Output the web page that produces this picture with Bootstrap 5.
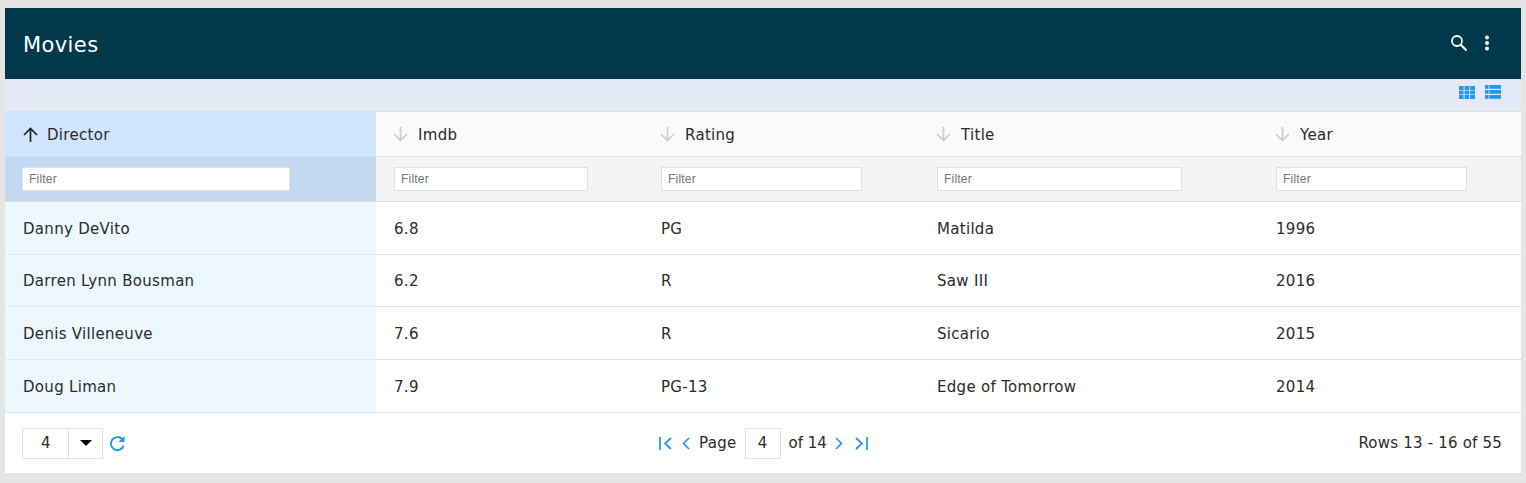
<!DOCTYPE html>
<html lang="en"><head><meta charset="utf-8"><title>Movies</title>
<link href="https://cdn.jsdelivr.net/npm/bootstrap@5.3.0/dist/css/bootstrap.min.css" rel="stylesheet">
<style>
html,body{height:100%}
body{background:#e5e5e5;font-family:"DejaVu Sans",Verdana,sans-serif;font-size:15px;letter-spacing:.3px;color:#2b2b2b;padding:8px 5px 10px;overflow:hidden}
.panel-box{background:#fff;width:1516px;height:465px}
.head-bar{height:71px;background:#00394c;color:#fff;padding:0 31px 1px 18px}
.head-title{font-size:21px;line-height:1;padding-top:5px;letter-spacing:.4px}
.tool-bar{height:33px;background:#e3eaf5;border-bottom:1px solid #dcdfe4;padding:0 20px 6px 0}
.list-ico{margin-left:2px}
.grid-table{width:1516px;table-layout:fixed;border-collapse:separate;border-spacing:0;margin:0}
.c1{width:371px}.c2{width:267px}.c3{width:276px}.c4{width:339px}.c5{width:263px}
.grid-table th,.grid-table td{padding:0 0 0 18px;font-weight:400;vertical-align:middle;border-bottom:1px solid #e0e0e0}
.title-row th{height:45px;background:#fafafa;padding-top:3px}
.title-row th.on{background:#cfe5fd;border-bottom-color:#d5dde6}
.filter-row th{height:45px;background:#f4f4f4}
.filter-row th.on{background:#c3d9f2;padding-left:17px}
.data-row td{height:53px;padding-top:2px}
.data-row.shorter td{height:52px}
.data-row td.on{background:#ecf7fe;border-bottom-color:#dcebf5}
.sort-ico{margin:0 8px 0 -1px;vertical-align:-2px}
.sort-ico.off{margin:0 9px 0 -2px}
.filter-input{display:block;height:24px;border:1px solid #e0e0e0;background:#fff;font:12px "Liberation Sans",Arial,sans-serif;letter-spacing:.2px;padding:0 6px;color:#333;outline:0}
.filter-input::placeholder{color:#757575;opacity:1}
.f1{width:268px}.f2{width:194px}.f3{width:201px}.f4{width:245px}.f5{width:191px}
.foot-bar{height:60px;padding:0 19px 0 17px}
.foot-side{flex:1 1 0}
.size-pick{width:81px;height:31px;border:1px solid #e0e0e0;margin-right:6px}
.size-val{width:46px;border-right:1px solid #e0e0e0;text-align:center;line-height:29px;padding-left:1px}
.size-arrow{flex:1}
.caret-shape{width:0;height:0;border:6px solid transparent;border-top:6px solid #000;border-bottom:0}
.page-box{width:36px;height:31px;border:1px solid #e0e0e0;text-align:center;line-height:29px;margin:0 8px}
.pg-btn{margin:0 6px}
.pg-first{margin:0 4px 0 11px}
.pg-last{margin:0 8px 0 6px}
.pg-label{margin-left:3px}
.pg-of{margin-right:2px;letter-spacing:0}
.rows-txt{letter-spacing:.2px}
</style></head><body>
<div class="panel-box d-flex flex-column">
 <div class="head-bar d-flex align-items-center justify-content-between">
  <div class="head-title">Movies</div>
  <div class="d-flex align-items-center gap-3">
   <svg width="18" height="18" viewBox="0 0 18 18" fill="none" stroke="#fff" stroke-width="1.8"><circle cx="7" cy="7" r="5"/><path d="M10.8 10.8 16.5 16.5" stroke-width="2"/></svg>
   <svg width="6" height="16" viewBox="0 0 6 16" fill="#fff"><circle cx="3" cy="2.5" r="2"/><circle cx="3" cy="8" r="2"/><circle cx="3" cy="13.5" r="2"/></svg>
  </div>
 </div>
 <div class="tool-bar d-flex align-items-center justify-content-end gap-2">
  <svg width="16" height="13" viewBox="0 0 16 13" fill="#2196f3"><rect width="4.6" height="4" y="0"/><rect x="5.6" width="4.6" height="4"/><rect x="11.2" width="4.8" height="4"/><rect y="4.6" width="4.6" height="3.8"/><rect x="5.6" y="4.6" width="4.6" height="3.8"/><rect x="11.2" y="4.6" width="4.8" height="3.8"/><rect y="9" width="4.6" height="4"/><rect x="5.6" y="9" width="4.6" height="4"/><rect x="11.2" y="9" width="4.8" height="4"/></svg>
  <svg class="list-ico" width="16" height="14" viewBox="0 0 16 14" fill="#2196f3"><rect width="3.6" height="3.8"/><rect x="4.4" width="11.6" height="3.8"/><rect y="5" width="3.6" height="3.8"/><rect x="4.4" y="5" width="11.6" height="3.8"/><rect y="10" width="3.6" height="3.8"/><rect x="4.4" y="10" width="11.6" height="3.8"/></svg>
 </div>
 <table class="grid-table">
  <colgroup><col class="c1"><col class="c2"><col class="c3"><col class="c4"><col class="c5"></colgroup>
  <thead>
   <tr class="title-row">
    <th class="on"><svg class="sort-ico" width="17" height="15" viewBox="0 0 17 15" fill="none" stroke="#222" stroke-width="1.7"><path d="M8.5 15V1.5M2 8l6.5-6.5L15 8"/></svg>Director</th>
    <th><svg class="sort-ico off" width="17" height="15" viewBox="0 0 17 15" fill="none" stroke="#ccc" stroke-width="1.7"><path d="M8.5 0v13.5M2 7l6.5 6.5L15 7"/></svg>Imdb</th>
    <th><svg class="sort-ico off" width="17" height="15" viewBox="0 0 17 15" fill="none" stroke="#ccc" stroke-width="1.7"><path d="M8.5 0v13.5M2 7l6.5 6.5L15 7"/></svg>Rating</th>
    <th><svg class="sort-ico off" width="17" height="15" viewBox="0 0 17 15" fill="none" stroke="#ccc" stroke-width="1.7"><path d="M8.5 0v13.5M2 7l6.5 6.5L15 7"/></svg>Title</th>
    <th><svg class="sort-ico off" width="17" height="15" viewBox="0 0 17 15" fill="none" stroke="#ccc" stroke-width="1.7"><path d="M8.5 0v13.5M2 7l6.5 6.5L15 7"/></svg>Year</th>
   </tr>
   <tr class="filter-row">
    <th class="on"><input class="filter-input f1" placeholder="Filter"></th>
    <th><input class="filter-input f2" placeholder="Filter"></th>
    <th><input class="filter-input f3" placeholder="Filter"></th>
    <th><input class="filter-input f4" placeholder="Filter"></th>
    <th><input class="filter-input f5" placeholder="Filter"></th>
   </tr>
  </thead>
  <tbody>
   <tr class="data-row"><td class="on">Danny DeVito</td><td>6.8</td><td>PG</td><td>Matilda</td><td>1996</td></tr>
   <tr class="data-row shorter"><td class="on">Darren Lynn Bousman</td><td>6.2</td><td>R</td><td>Saw III</td><td>2016</td></tr>
   <tr class="data-row"><td class="on">Denis Villeneuve</td><td>7.6</td><td>R</td><td>Sicario</td><td>2015</td></tr>
   <tr class="data-row"><td class="on">Doug Liman</td><td>7.9</td><td>PG-13</td><td>Edge of Tomorrow</td><td>2014</td></tr>
  </tbody>
 </table>
 <div class="foot-bar d-flex align-items-center">
  <div class="foot-side d-flex align-items-center">
   <div class="size-pick d-flex align-items-stretch flex-shrink-0">
    <div class="size-val">4</div>
    <div class="size-arrow d-flex align-items-center justify-content-center"><span class="caret-shape"></span></div>
   </div>
   <svg width="17" height="17" viewBox="0 0 17 17" fill="none" stroke="#2196f3" stroke-width="2"><path d="M14.6 10.6A6.5 6.5 0 1 1 13 4"/><path d="M15.5 1v6h-6" fill="#2196f3" stroke="none"/></svg>
  </div>
  <div class="d-flex align-items-center flex-shrink-0">
   <svg class="pg-first" width="13" height="13" viewBox="0 0 13 13" fill="none" stroke="#2196f3" stroke-width="1.7"><path d="M1 0v13M12 1 6 6.5l6 5.5"/></svg>
   <svg class="pg-btn" width="8" height="13" viewBox="0 0 8 13" fill="none" stroke="#2196f3" stroke-width="1.7"><path d="M7 1 1.5 6.5 7 12"/></svg>
   <span class="pg-label">Page</span><span class="page-box">4</span><span class="pg-of">of 14</span>
   <svg class="pg-btn" width="8" height="13" viewBox="0 0 8 13" fill="none" stroke="#2196f3" stroke-width="1.7"><path d="M1 1l5.5 5.5L1 12"/></svg>
   <svg class="pg-last" width="13" height="13" viewBox="0 0 13 13" fill="none" stroke="#2196f3" stroke-width="1.7"><path d="M12 0v13M1 1l6 5.5L1 12"/></svg>
  </div>
  <div class="foot-side text-end"><span class="rows-txt text-nowrap">Rows 13 - 16 of 55</span></div>
 </div>
</div>
<script src="https://cdn.jsdelivr.net/npm/bootstrap@5.3.0/dist/js/bootstrap.bundle.min.js"></script>
</body></html>
